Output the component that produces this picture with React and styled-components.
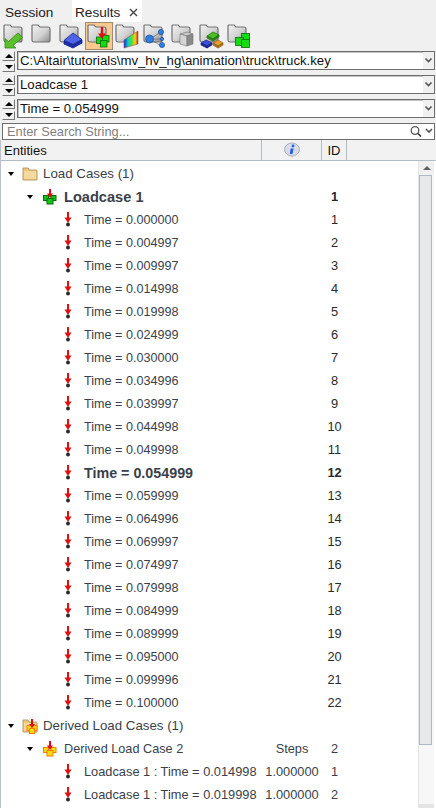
import React from "react";
import styled, { createGlobalStyle } from "styled-components";

const GlobalStyle = createGlobalStyle`
  html, body {
    margin: 0;
    padding: 0;
    background: #f0f0f0;
  }
  body {
    font-family: "Liberation Sans", Arial, sans-serif;
    font-size: 13px;
    color: #000;
  }
`;

const Panel = styled.div`
  width: 436px;
  height: 808px;
  overflow: hidden;
  background: #f0f0f0;
  display: flex;
  flex-direction: column;
`;

const TabBar = styled.div`
  height: 22px;
  display: flex;
  align-items: flex-end;
  padding-left: 1px;
  flex: none;
`;

const Tab = styled.div`
  height: ${(p) => (p.$active ? 22 : 19)}px;
  width: ${(p) => (p.$active ? 70 : 71)}px;
  padding-left: ${(p) => (p.$active ? 3 : 4)}px;
  padding-top: ${(p) => (p.$active ? 3 : 0)}px;
  box-sizing: border-box;
  background: ${(p) => (p.$active ? "#ffffff" : "#f0f0f0")};
  display: flex;
  align-items: center;
  gap: 9px;
  font-size: 13.6px;
  color: #222;
`;

const Toolbar = styled.div`
  height: 28px;
  display: flex;
  align-items: center;
  padding-left: 1px;
  flex: none;
`;

const ToolButton = styled.div`
  width: 28px;
  height: 28px;
  box-sizing: border-box;
  display: flex;
  align-items: center;
  justify-content: center;
  background: ${(p) => (p.$active ? "#fbc88f" : "transparent")};
  border: 1px solid ${(p) => (p.$active ? "#a08a70" : "transparent")};
`;

const SelectRow = styled.div`
  height: 24px;
  display: flex;
  align-items: flex-start;
  gap: 2px;
  padding: 1px 0 0 2px;
  box-sizing: border-box;
  flex: none;
`;

const Stepper = styled.div`
  width: 13px;
  height: 21px;
  display: flex;
  flex-direction: column;
  gap: 2px;
  flex: none;
`;

const StepButton = styled.div`
  flex: 1;
  border: 1px solid #777;
  border-top-color: #f8f8f8;
  border-left-color: #f8f8f8;
  display: flex;
  align-items: center;
  justify-content: center;
  &::after {
    content: "";
    border-left: 4px solid transparent;
    border-right: 4px solid transparent;
    ${(p) => (p.$down ? "border-top: 4px solid #000;" : "border-bottom: 4px solid #000;")}
  }
`;

const SelectBox = styled.div`
  width: 418px;
  height: 19px;
  box-sizing: border-box;
  border: 1px solid #6e6e6e;
  background: #fff;
  display: flex;
  align-items: center;
  padding-left: 2px;
  position: relative;
  font-size: 13.2px;
  color: #111;
  box-shadow: inset 0 1px 0 #c4c4c4, inset 1px 0 0 #c4c4c4;
`;

const Chevron = styled.svg`
  position: absolute;
  right: 0;
  top: 0;
  width: 11px;
  height: 17px;
  background: #f0f0f0;
`;

const SearchBox = styled.div`
  height: 17px;
  margin: 1px 0 0 2px;
  width: 433px;
  box-sizing: border-box;
  border: 1px solid #6e6e6e;
  background: #fff;
  display: flex;
  align-items: center;
  padding-left: 4px;
  color: #7f7f7f;
  font-size: 12.8px;
  position: relative;
  flex: none;
`;

const SearchIcons = styled.svg`
  position: absolute;
  right: 0;
  top: 0;
  width: 26px;
  height: 15px;
`;

const TreeFrame = styled.div`
  flex: 1;
  min-height: 0;
  display: flex;
  flex-direction: column;
  border-left: 1px solid #b9c2cc;
`;

const HeaderRow = styled.div`
  height: 21px;
  flex: none;
  display: grid;
  grid-template-columns: 261px 60px 25px 1fr;
  background: #f2f2f2;
  border-bottom: 1px solid #b2bcc6;
  box-sizing: border-box;
  font-size: 13px;
  color: #111;
`;

const HeaderCell = styled.div`
  display: flex;
  align-items: center;
  justify-content: ${(p) => p.$align || "flex-start"};
  padding-left: ${(p) => p.$pad || 0}px;
  border-right: ${(p) => (p.$noline ? "none" : "1px solid #b2bcc6")};
`;

const TreeBody = styled.div`
  flex: 1;
  min-height: 0;
  display: flex;
  background: #fff;
`;

const Rows = styled.div`
  flex: 1;
  min-width: 0;
  padding-top: 1px;
  overflow: hidden;
`;

const Row = styled.div`
  height: 23px;
  display: grid;
  grid-template-columns: 261px 60px 25px;
  align-items: center;
  font-size: ${(p) => p.$size || 12.7}px;
  font-weight: ${(p) => (p.$bold ? 700 : 400)};
  color: #3a3f4a;
`;

const RowLabel = styled.div`
  display: flex;
  align-items: center;
  padding-left: ${(p) => p.$indent}px;
  white-space: nowrap;
  min-width: 0;
`;

const RowCell = styled.div`
  text-align: center;
  font-size: 12.8px;
  color: ${(p) => (p.$dark ? "#2a2a2a" : "#3a3f4a")};
`;

const Twisty = styled.span`
  width: 0;
  height: 0;
  border-left: 3.5px solid transparent;
  border-right: 3.5px solid transparent;
  border-top: 4px solid #000;
  flex: none;
  margin-right: ${(p) => p.$gap}px;
`;

const NodeIcon = styled.svg`
  flex: none;
  margin-right: ${(p) => p.$gap}px;
`;

const Scrollbar = styled.div`
  width: 15px;
  flex: none;
  margin-right: 2px;
  background: #f7f7f7;
  display: flex;
  flex-direction: column;
  border-left: 1px solid #e4e4e4;
`;

const ScrollArrow = styled.div`
  height: 14px;
  display: flex;
  align-items: center;
  justify-content: center;
  background: #f0f0f0;
  &::after {
    content: "";
    border-left: 4px solid transparent;
    border-right: 4px solid transparent;
    border-bottom: 4px solid #606060;
  }
`;

const ScrollThumb = styled.div`
  height: 570px;
  width: 13px;
  box-sizing: border-box;
  background: #e8e8e8;
  border: 1px solid #aeb9c4;
`;

const ScrollEnd = styled.div`
  margin-top: auto;
  height: 4px;
  background: #e4e4e4;
`;

const Folder = () => (
  <path
    d="M3 2h5l2 2h8a2 2 0 0 1 2 2v11a2 2 0 0 1-2 2H4a2 2 0 0 1-2-2V3a1 1 0 0 1 1-1z"
    fill="url(#fold)"
    stroke="#727272"
    strokeWidth="1.2"
  />
);

const ToolIcon = ({ kind }) => (
  <svg width="26" height="26" viewBox="0 0 26 26">
    <defs>
      <linearGradient id="fold" x1="0" y1="0" x2="1" y2="1">
        <stop offset="0" stopColor="#f2f2f2" />
        <stop offset=".55" stopColor="#d2d2d2" />
        <stop offset="1" stopColor="#8a8a8a" />
      </linearGradient>
      <linearGradient id="rain" x1="0" x2="1" y1="0" y2="0">
        <stop offset="0" stopColor="#1030e0" />
        <stop offset=".3" stopColor="#10d0c0" />
        <stop offset=".55" stopColor="#50e030" />
        <stop offset=".8" stopColor="#f0d020" />
        <stop offset="1" stopColor="#e02010" />
      </linearGradient>
    </defs>
    <Folder />
    {kind === "open" && (
      <path d="M3 25V15.5l3.5 3L16 10l4.5 4.5-9.5 8L14 25z" fill="#5cc02c" stroke="#2f8a14" strokeWidth=".8" />
    )}
    {kind === "plate" && (
      <g stroke="#12208c" strokeWidth=".8">
        <path d="M6 18v3l9 4 9-5v-3z" fill="#1e2ea6" />
        <path d="M6 17.5l9-7.5 9 6.5-9 5z" fill="#4f63e6" />
      </g>
    )}
    {kind === "load" && (
      <g>
        <g fill="#14dc14" stroke="#0a6b0a" strokeWidth=".8">
          <rect x="10.5" y="14" width="6.5" height="6.5" />
          <rect x="16.5" y="12.5" width="6.5" height="6.5" />
          <rect x="14.5" y="17.5" width="6.5" height="6.5" />
        </g>
        <rect x="14.8" y="4" width="2.4" height="9" fill="#e01010" />
        <path d="M12 10.5h8L16 16z" fill="#e01010" />
      </g>
    )}
    {kind === "map" && <path d="M10 17l14-9v13l-14 4z" fill="url(#rain)" stroke="#a04030" strokeWidth=".5" />}
    {kind === "graph" && (
      <g fill="#2f7fe0" stroke="#123f90" strokeWidth=".6">
        <path d="M8 16l11-7M8 16h10M8 16l11 7" stroke="#555" fill="none" />
        <circle cx="7.5" cy="16" r="4" />
        <circle cx="19" cy="9" r="2.6" />
        <circle cx="20" cy="16" r="1.7" />
        <circle cx="20" cy="22" r="2.6" />
      </g>
    )}
    {kind === "cube" && (
      <g stroke="#707070" strokeWidth=".6">
        <path d="M10 11l7-2 6 2-6 2z" fill="#c8c8c8" />
        <path d="M10 11l7 2v10l-7-2z" fill="#d4d4d4" />
        <path d="M17 13l6-2v10l-6 2z" fill="#8a8a8a" />
      </g>
    )}
    {kind === "groups" && (
      <g strokeWidth=".7">
        <path d="M3 20l5-3 6 3-5 3z" fill="#3a4fe0" stroke="#121f80" />
        <path d="M3 20v2l6 3v-2zM9 23v2l5-3v-2z" fill="#1d2c9a" stroke="#121f80" />
        <path d="M9 13l6-4 6 3-6 4z" fill="#48c020" stroke="#1f6a10" />
        <path d="M9 13v2l6 3 6-4v-2l-6 4z" fill="#2f8a14" stroke="#1f6a10" />
        <path d="M15 20l5-3 5 3-5 3z" fill="#e8a030" stroke="#8a5a10" />
        <path d="M15 20v2l5 3 5-3v-2l-5 3z" fill="#b87818" stroke="#8a5a10" />
      </g>
    )}
    {kind === "loads" && (
      <g fill="#14dc14" stroke="#0a6b0a" strokeWidth=".8">
        <rect x="15.5" y="10.5" width="8" height="8" />
        <rect x="9.5" y="14.5" width="8" height="8" />
        <rect x="15.5" y="16.5" width="8" height="8" />
      </g>
    )}
  </svg>
);

const ArrowIcon = () => (
  <NodeIcon width="8" height="16" viewBox="0 0 8 16" $gap={12}>
    <rect x="3" y="0" width="2" height="9" fill="#e01010" />
    <path d="M0.5 5.5h7L4 11z" fill="#e01010" />
    <circle cx="4" cy="12.5" r="2" fill="#2c2c2c" />
  </NodeIcon>
);

const FolderIcon = ({ derived }) => (
  <NodeIcon width="16" height="16" viewBox="0 0 16 16" $gap={5}>
    <path d="M1 2h5l1 2h7a1 1 0 0 1 1 1v9H1z" fill="#f0c67c" stroke="#b89a66" />
    <rect x="2" y="5" width="12" height="8" fill="#f6d99c" />
    {derived && (
      <g>
        <g fill="#ffd910" stroke="#f08000">
          <rect x="5" y="7.5" width="5" height="5" />
          <rect x="10" y="7.5" width="5" height="5" />
          <rect x="7.5" y="10.5" width="5" height="5" />
        </g>
        <rect x="9" y="1" width="2" height="8" fill="#e01010" />
        <path d="M7 6h6l-3 4z" fill="#e01010" />
      </g>
    )}
  </NodeIcon>
);

const CaseIcon = ({ fill, line }) => (
  <NodeIcon width="14" height="16" viewBox="0 0 14 16" $gap={7}>
    <g fill={fill} stroke={line}>
      <rect x="0.5" y="6.5" width="5" height="5" />
      <rect x="8" y="6.5" width="5" height="5" />
      <rect x="4" y="9.5" width="6" height="5.5" />
    </g>
    <rect x="6" y="0" width="2" height="7" fill="#e01010" />
    <path d="M4 4.5h6L7 9z" fill="#e01010" />
  </NodeIcon>
);

const steps = [
  "0.000000", "0.004997", "0.009997", "0.014998", "0.019998", "0.024999",
  "0.030000", "0.034996", "0.039997", "0.044998", "0.049998", "0.054999",
  "0.059999", "0.064996", "0.069997", "0.074997", "0.079998", "0.084999",
  "0.089999", "0.095000", "0.099996", "0.100000",
];

const tools = ["open", "blank", "plate", "load", "map", "graph", "cube", "groups", "loads"];

const Select = ({ children }) => (
  <SelectRow>
    <Stepper>
      <StepButton />
      <StepButton $down />
    </Stepper>
    <SelectBox>
      {children}
      <Chevron viewBox="0 0 11 17">
        <path d="M2.5 6.5L5.5 9.5L8.5 6.5" fill="none" stroke="#555" strokeWidth="1.6" />
      </Chevron>
    </SelectBox>
  </SelectRow>
);

export default function App() {
  return (
    <Panel>
      <GlobalStyle />
      <TabBar>
        <Tab>Session</Tab>
        <Tab $active>
          Results
          <svg width="9" height="9" viewBox="0 0 9 9">
            <path d="M1 1l7 7M8 1l-7 7" stroke="#444" strokeWidth="1.4" />
          </svg>
        </Tab>
      </TabBar>
      <Toolbar>
        {tools.map((t) => (
          <ToolButton key={t} $active={t === "load"}>
            <ToolIcon kind={t} />
          </ToolButton>
        ))}
      </Toolbar>
      <Select>C:\Altair\tutorials\mv_hv_hg\animation\truck\truck.key</Select>
      <Select>Loadcase 1</Select>
      <Select>Time = 0.054999</Select>
      <SearchBox>
        Enter Search String...
        <SearchIcons viewBox="0 0 26 15">
          <circle cx="7" cy="6.5" r="3.8" fill="none" stroke="#555" strokeWidth="1.3" />
          <path d="M10 9.5l3 3" stroke="#333" strokeWidth="1.6" />
          <path d="M18 5l3 3 3-3" fill="none" stroke="#555" strokeWidth="1.6" />
        </SearchIcons>
      </SearchBox>
      <TreeFrame>
        <HeaderRow>
          <HeaderCell $pad={3}>Entities</HeaderCell>
          <HeaderCell $align="center">
            <svg width="18" height="16" viewBox="0 0 18 16">
              <ellipse cx="9" cy="7.5" rx="7.5" ry="6.5" fill="#d8dce6" stroke="#a8aeb8" />
              <path d="M8 13l1 3 3-3z" fill="#c4c8d2" />
              <path d="M7.6 6.4h3L9.5 12h-2.6z" fill="#2060e8" />
              <circle cx="10" cy="4" r="1.4" fill="#2060e8" />
            </svg>
          </HeaderCell>
          <HeaderCell $align="center">ID</HeaderCell>
          <HeaderCell $noline />
        </HeaderRow>
        <TreeBody>
          <Rows>
            <Row $size={13.3}>
              <RowLabel $indent={7}>
                <Twisty $gap={8} />
                <FolderIcon />
                Load Cases (1)
              </RowLabel>
            </Row>
            <Row $bold $size={14.6}>
              <RowLabel $indent={26}>
                <Twisty $gap={10} />
                <CaseIcon fill="#17c217" line="#0a6b0a" />
                Loadcase 1
              </RowLabel>
              <span />
              <RowCell $dark>1</RowCell>
            </Row>
            {steps.map((s, i) => (
              <Row key={s} $bold={i === 11} $size={i === 11 ? 14.3 : 12.6}>
                <RowLabel $indent={63}>
                  <ArrowIcon />
                  Time = {s}
                </RowLabel>
                <span />
                <RowCell $dark>{i + 1}</RowCell>
              </Row>
            ))}
            <Row $size={13.3}>
              <RowLabel $indent={7}>
                <Twisty $gap={8} />
                <FolderIcon derived />
                Derived Load Cases (1)
              </RowLabel>
            </Row>
            <Row>
              <RowLabel $indent={26}>
                <Twisty $gap={10} />
                <CaseIcon fill="#ffd910" line="#f08000" />
                Derived Load Case 2
              </RowLabel>
              <RowCell>Steps</RowCell>
              <RowCell>2</RowCell>
            </Row>
            {["0.014998", "0.019998"].map((s, i) => (
              <Row key={s} $size={12.8}>
                <RowLabel $indent={63}>
                  <ArrowIcon />
                  Loadcase 1 : Time = {s}
                </RowLabel>
                <RowCell>1.000000</RowCell>
                <RowCell>{i + 1}</RowCell>
              </Row>
            ))}
          </Rows>
          <Scrollbar>
            <ScrollArrow />
            <ScrollThumb />
            <ScrollEnd />
          </Scrollbar>
        </TreeBody>
      </TreeFrame>
    </Panel>
  );
}
